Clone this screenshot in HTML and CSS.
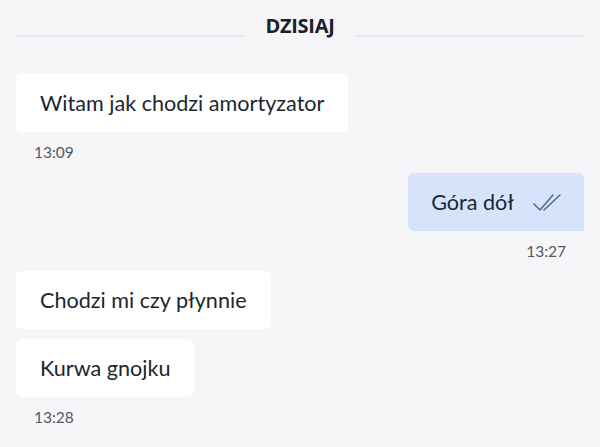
FILE: index.html
```html
<!DOCTYPE html>
<html lang="pl">
<head>
<meta charset="utf-8">
<link rel="stylesheet" href="styles.css">
</head>
<body>
<div class="chat">
  <div class="day">
    <span class="line"></span>
    <span class="day-label">DZISIAJ</span>
    <span class="line"></span>
  </div>

  <div class="group in first">
    <div class="bubble">Witam jak chodzi amortyzator</div>
    <div class="time">13:09</div>
  </div>

  <div class="group out">
    <div class="bubble blue">Góra dół
      <svg class="ticks" width="32" height="20" viewBox="0 0 32 20" fill="none" stroke="#4f6d95" stroke-width="1.6" stroke-linecap="round" stroke-linejoin="round">
        <path d="M2 11 L8 17 L21 2"/>
        <path d="M12 17 L28 2"/>
      </svg>
    </div>
    <div class="time">13:27</div>
  </div>

  <div class="group in">
    <div class="bubble">Chodzi mi czy płynnie</div>
    <div class="bubble">Kurwa gnojku</div>
    <div class="time">13:28</div>
  </div>
</div>
</body>
</html>
```
FILE: styles.css
```css
html, body {
  margin: 0;
  padding: 0;
  background: #f6f6f8;
}
body {
  width: 600px;
  height: 447px;
  overflow: hidden;
  font-family: Lato, "Open Sans", sans-serif;
  color: #1c262e;
}
.chat {
  padding: 0 16px 0 16px;
  display: flex;
  flex-direction: column;
}
.day {
  display: flex;
  align-items: center;
  height: 50px;
  gap: 20px;
}
.line {
  flex: 1;
  height: 2px;
  background: #e4ebf2;
  margin-top: 22px;
}
.day-label {
  font-family: "Open Sans", sans-serif;
  font-weight: 700;
  font-size: 20px;
  letter-spacing: -0.3px;
  color: #182129;
}
.group {
  display: flex;
  flex-direction: column;
  gap: 10px;
}
.group.in { align-items: flex-start; }
.group.out { align-items: flex-end; }
.group.first { margin-top: 23px; }
.group.in + .group.out { margin-top: 12px; }
.group.out + .group.in { margin-top: 11px; }
.bubble {
  background: #ffffff;
  border-radius: 6px;
  padding: 0 24px;
  height: 58px;
  display: flex;
  align-items: center;
  font-size: 21.6px;
  box-sizing: border-box;
}
.group.first .bubble { height: 59px; }
.bubble.blue {
  background: #d6e3fb;
  border-bottom-right-radius: 0;
  padding: 0 20px 0 23px;
  gap: 18px;
}
.ticks { display: block; margin-top: 2px; }
.time {
  font-size: 15.5px;
  color: #4f5a62;
  line-height: 18px;
  margin-top: 1px;
  padding-left: 18px;
}
.group.out .time {
  padding-left: 0;
  padding-right: 18px;
}
```
